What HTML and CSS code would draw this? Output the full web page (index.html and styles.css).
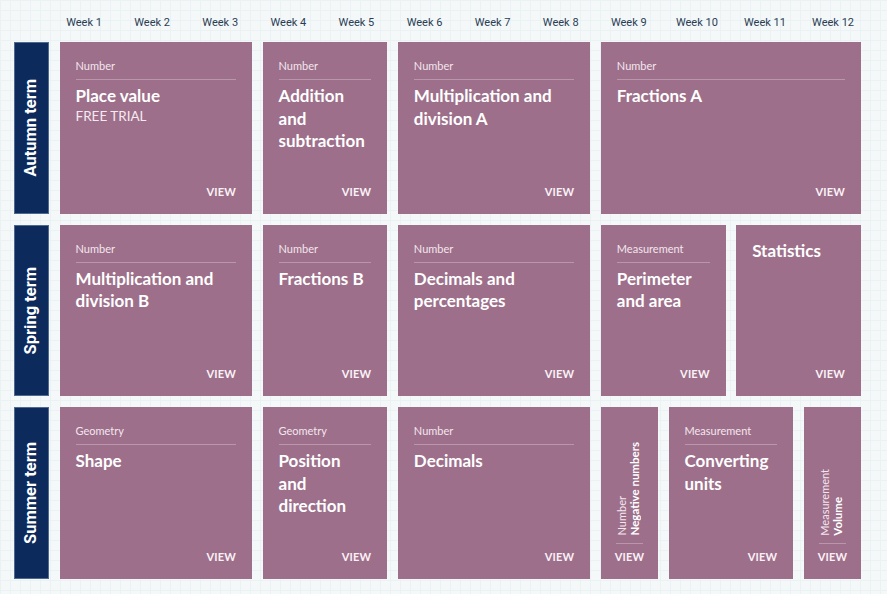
FILE: index.html
```html
<!DOCTYPE html>
<html lang="en">
<head>
<meta charset="utf-8">
<title>Year plan</title>
<link rel="stylesheet" href="styles.css">
</head>
<body>
<div class="page">
  <div class="weeks">
    <span>Week 1</span><span>Week 2</span><span>Week 3</span><span>Week 4</span>
    <span>Week 5</span><span>Week 6</span><span>Week 7</span><span>Week 8</span>
    <span>Week 9</span><span>Week 10</span><span>Week 11</span><span>Week 12</span>
  </div>
  <div class="plan">
    <div class="term"><span>Autumn term</span></div>
    <a class="card s3"><div class="cat">Number</div><div class="rule"></div><div class="title">Place value</div><div class="free">FREE TRIAL</div><div class="view">VIEW</div></a>
    <a class="card s2"><div class="cat">Number</div><div class="rule"></div><div class="title">Addition and subtraction</div><div class="view">VIEW</div></a>
    <a class="card s3"><div class="cat">Number</div><div class="rule"></div><div class="title">Multiplication and division A</div><div class="view">VIEW</div></a>
    <a class="card s4"><div class="cat">Number</div><div class="rule"></div><div class="title">Fractions A</div><div class="view">VIEW</div></a>

    <div class="term"><span>Spring term</span></div>
    <a class="card s3"><div class="cat">Number</div><div class="rule"></div><div class="title">Multiplication and division B</div><div class="view">VIEW</div></a>
    <a class="card s2"><div class="cat">Number</div><div class="rule"></div><div class="title">Fractions B</div><div class="view">VIEW</div></a>
    <a class="card s3"><div class="cat">Number</div><div class="rule"></div><div class="title">Decimals and percentages</div><div class="view">VIEW</div></a>
    <a class="card s2"><div class="cat">Measurement</div><div class="rule"></div><div class="title">Perimeter and area</div><div class="view">VIEW</div></a>
    <a class="card s2 nocat"><div class="title">Statistics</div><div class="view">VIEW</div></a>

    <div class="term"><span>Summer term</span></div>
    <a class="card s3"><div class="cat">Geometry</div><div class="rule"></div><div class="title">Shape</div><div class="view">VIEW</div></a>
    <a class="card s2"><div class="cat">Geometry</div><div class="rule"></div><div class="title">Position and direction</div><div class="view">VIEW</div></a>
    <a class="card s3"><div class="cat">Number</div><div class="rule"></div><div class="title">Decimals</div><div class="view">VIEW</div></a>
    <a class="card s1 narrow"><div class="vtext"><span class="vcat">Number</span><span class="vtitle">Negative numbers</span></div><div class="rule"></div><div class="view">VIEW</div></a>
    <a class="card s2"><div class="cat">Measurement</div><div class="rule"></div><div class="title">Converting units</div><div class="view">VIEW</div></a>
    <a class="card s1 narrow"><div class="vtext"><span class="vcat">Measurement</span><span class="vtitle">Volume</span></div><div class="rule"></div><div class="view">VIEW</div></a>
  </div>
</div>
</body>
</html>
```

FILE: styles.css
```css
* { box-sizing: border-box; }
html, body { margin: 0; padding: 0; }
body {
  width: 887px;
  height: 594px;
  overflow: hidden;
  background-color: #f4f8f9;
  background-image:
    linear-gradient(to right, #ebf2f4 1px, transparent 1px),
    linear-gradient(to bottom, #ebf2f4 1px, transparent 1px);
  background-size: 10px 10px;
  font-family: "Lato", "Inter", sans-serif;
}
.page {
  padding: 0 26px 0 14px;
}
.weeks {
  display: grid;
  grid-template-columns: repeat(12, 68.1px);
  margin-left: 36px;
  height: 42px;
  align-items: center;
  font-family: Roboto, "Liberation Sans", sans-serif;
  font-size: 11px;
  color: #2b3d55;
  padding-top: 3px;
}
.weeks span { text-align: center; }
.plan {
  display: grid;
  grid-template-columns: 35px repeat(12, minmax(0, 1fr));
  grid-auto-rows: 171.5px;
  column-gap: 10.5px;
  row-gap: 11px;
}
.term {
  background: #0c2a5c;
  border: 1px solid #4f6890;
  display: flex;
  align-items: center;
  justify-content: center;
}
.term span {
  writing-mode: vertical-rl;
  transform: rotate(180deg);
  color: #ffffff;
  font-family: Roboto, "Liberation Sans", sans-serif;
  font-weight: 700;
  font-size: 16.5px;
  line-height: 1;
  white-space: nowrap;
}
.card {
  background: #9d6f8a;
  color: #ffffff;
  display: flex;
  flex-direction: column;
  min-width: 0;
  padding: 17px 16px 14px;
  text-decoration: none;
}
.s1 { grid-column: span 1; }
.s2 { grid-column: span 2; }
.s3 { grid-column: span 3; }
.s4 { grid-column: span 4; }
.cat {
  font-size: 11px;
  line-height: 14px;
  color: #f3e6ee;
}
.rule {
  border-top: 1px solid rgba(255, 255, 255, 0.28);
  margin: 6px 0 5px;
}
.title {
  font-size: 17px;
  font-weight: 700;
  line-height: 22.5px;
}
.nocat { padding-top: 15px; }
.free {
  font-size: 13.5px;
  line-height: 16px;
  color: #f5eaf0;
}
.view {
  margin-top: auto;
  align-self: flex-end;
  font-size: 11px;
  font-weight: 700;
  line-height: 14px;
  letter-spacing: 0.2px;
  color: #fbf2f7;
  margin-bottom: 1px;
}
.narrow {
  padding: 15px 15px 14px;
}
.narrow .vtext {
  margin-top: auto;
  align-self: flex-start;
  writing-mode: vertical-rl;
  transform: rotate(180deg);
  display: flex;
  flex-direction: column;
  white-space: nowrap;
}
.vcat {
  font-size: 11px;
  line-height: 12px;
  color: #f3e6ee;
}
.vtitle {
  font-size: 11.5px;
  font-weight: 700;
  line-height: 14px;
}
.narrow .rule { margin: 7px 0 6px; }
.narrow .view { align-self: center; margin-top: 0; }
```
